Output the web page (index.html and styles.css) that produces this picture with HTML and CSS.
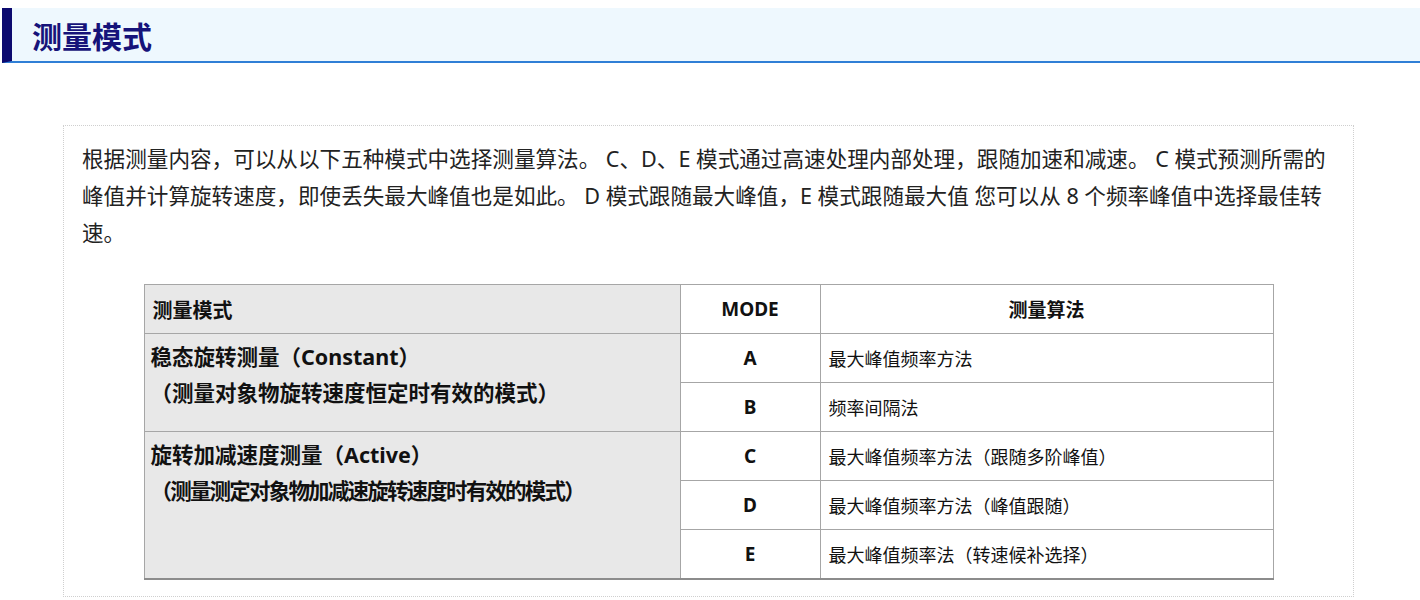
FILE: index.html
```html
<!DOCTYPE html>
<html lang="zh-CN">
<head>
<meta charset="utf-8">
<title>测量模式</title>
<link rel="stylesheet" href="styles.css">
</head>
<body>
<h2 class="section-title">测量模式</h2>
<div class="content-box">
  <p class="intro">根据测量内容，可以从以下五种模式中选择测量算法。 C、D、E 模式通过高速处理内部处理，跟随加速和减速。 C 模式预测所需的峰值并计算旋转速度，即使丢失最大峰值也是如此。 D 模式跟随最大峰值，E 模式跟随最大值 您可以从 8 个频率峰值中选择最佳转速。</p>
  <table class="mode-table">
    <colgroup>
      <col class="col-type">
      <col class="col-mode">
      <col class="col-algo">
    </colgroup>
    <thead>
      <tr>
        <th class="type-cell head-type">测量模式</th>
        <th class="mode-head">MODE</th>
        <th class="algo-head">测量算法</th>
      </tr>
    </thead>
    <tbody>
      <tr>
        <td class="type-cell" rowspan="2">
          <div class="type-name">稳态旋转测量（Constant）</div>
          <div class="type-desc">（测量对象物旋转速度恒定时有效的模式）</div>
        </td>
        <td class="mode-cell">A</td>
        <td class="algo-cell">最大峰值频率方法</td>
      </tr>
      <tr>
        <td class="mode-cell">B</td>
        <td class="algo-cell">频率间隔法</td>
      </tr>
      <tr>
        <td class="type-cell" rowspan="3">
          <div class="type-name">旋转加减速度测量（Active）</div>
          <div class="type-desc type-desc-tight">（测量测定对象物加减速旋转速度时有效的模式）</div>
        </td>
        <td class="mode-cell">C</td>
        <td class="algo-cell">最大峰值频率方法（跟随多阶峰值）</td>
      </tr>
      <tr>
        <td class="mode-cell">D</td>
        <td class="algo-cell">最大峰值频率方法（峰值跟随）</td>
      </tr>
      <tr>
        <td class="mode-cell">E</td>
        <td class="algo-cell">最大峰值频率法（转速候补选择）</td>
      </tr>
    </tbody>
  </table>
</div>
</body>
</html>
```

FILE: styles.css
```css
html, body {
  margin: 0;
  padding: 0;
  background: #ffffff;
}

body {
  font-family: "Noto Sans", "Noto Sans CJK SC", sans-serif;
  color: #222222;
}

.section-title {
  margin: 8px 0 0 2px;
  height: 53px;
  box-sizing: content-box;
  padding: 0 0 0 20px;
  display: flex;
  align-items: center;
  background: #eef8fe;
  border-left: 10px solid #0c0a6f;
  border-bottom: 2px solid #2f7fd6;
  font-size: 30px;
  font-weight: 700;
  color: #16137a;
}

.content-box {
  margin: 62px 0 0 63px;
  width: 1291px;
  box-sizing: border-box;
  border: 1px dotted #cfcfcf;
  padding: 14px 18px 16px 18px;
}

.intro {
  margin: 0;
  font-size: 21.6px;
  line-height: 37px;
  color: #222222;
}

.mode-table {
  width: 1129px;
  margin: 33px auto 0 auto;
  border-collapse: collapse;
  table-layout: fixed;
  border-bottom: 2px solid #8c8c8c;
}

.col-type { width: 536px; }
.col-mode { width: 140px; }
.col-algo { width: 453px; }

.mode-table th,
.mode-table td {
  border: 1px solid #a6a6a6;
  height: 49px;
  box-sizing: border-box;
  padding: 0 8px;
  color: #111111;
}

.type-cell {
  background: #e8e8e8;
  vertical-align: top;
  text-align: left;
}

.head-type {
  vertical-align: middle;
  font-size: 20px;
  font-weight: 700;
  padding-left: 6px;
}

.mode-head,
.algo-head {
  font-size: 19px;
  font-weight: 700;
  text-align: center;
  background: #ffffff;
}

td.type-cell {
  padding: 5px 6px 0 6px;
  font-size: 21.5px;
  font-weight: 700;
  line-height: 36px;
}

.type-desc-tight {
  letter-spacing: -1.8px;
}

.mode-cell {
  text-align: center;
  font-size: 19px;
  font-weight: 700;
}

.algo-cell {
  text-align: left;
  font-size: 18px;
  padding-left: 8px;
}
```
